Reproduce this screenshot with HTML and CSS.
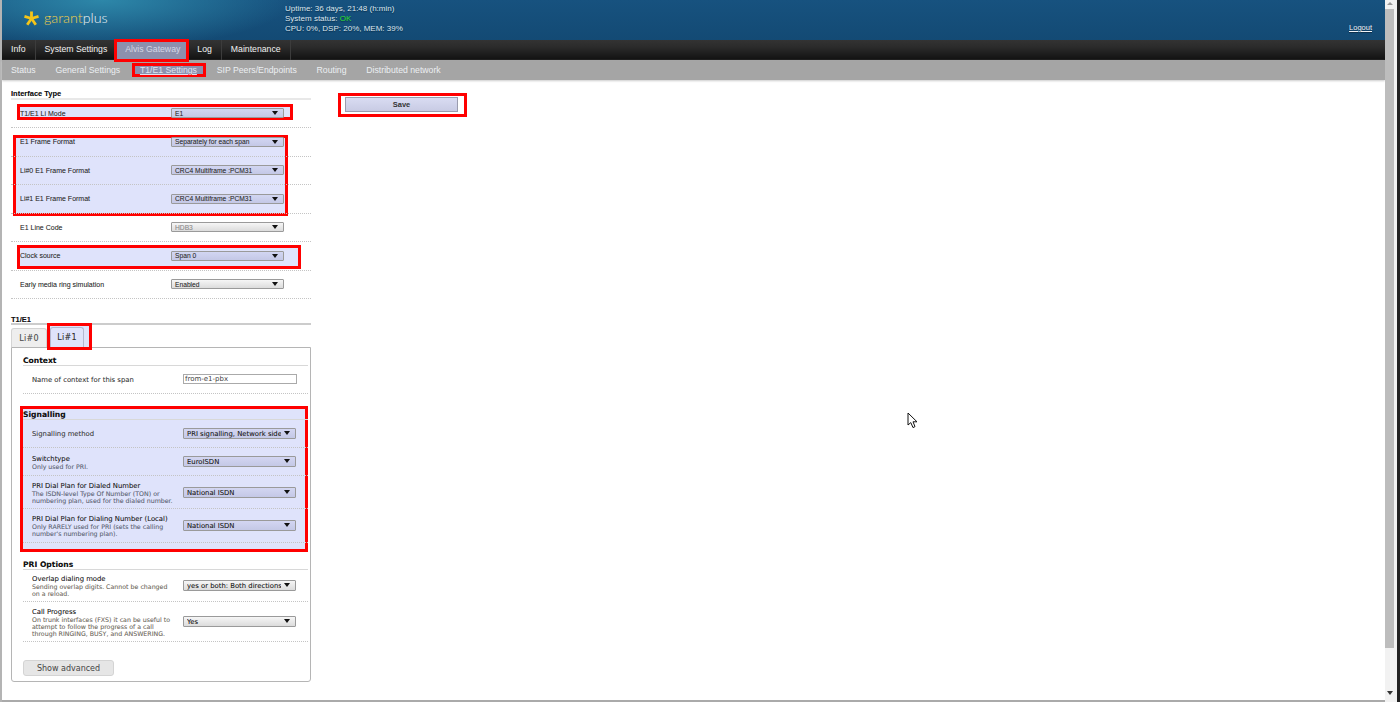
FILE: index.html
```html
<!DOCTYPE html>
<html lang="en">
<head>
<meta charset="utf-8">
<title>Garantplus Gateway</title>
<link rel="stylesheet" href="styles.css">
</head>
<body>
<div class="window">
  <div class="page">
    <header class="top">
      <div class="logo">
        <svg class="logo-star" width="15" height="15" viewBox="0 0 16 16" aria-hidden="true"><g stroke="#f5c518" stroke-width="3" stroke-linecap="butt"><line x1="8" y1="8" x2="8" y2="0.5"/><line x1="8" y1="8" x2="15.5" y2="5.8"/><line x1="8" y1="8" x2="0.5" y2="5.8"/><line x1="8" y1="8" x2="12.6" y2="14.6"/><line x1="8" y1="8" x2="3.4" y2="14.6"/></g></svg>
        <span class="logo-text"><span class="logo-a">garant</span>plus</span>
      </div>
      <div class="status">
        <div>Uptime: 36 days, 21:48 (h:min)</div>
        <div>System status: <b class="ok">OK</b></div>
        <div>CPU: 0%, DSP: 20%, MEM: 39%</div>
      </div>
      <a class="logout">Logout</a>
    </header>
    <nav class="nav">
      <a class="nav-item">Info</a>
      <a class="nav-item">System Settings</a>
      <a class="nav-item active">Alvis Gateway</a>
      <a class="nav-item">Log</a>
      <a class="nav-item">Maintenance</a>
    </nav>
    <nav class="subnav">
      <a class="sub-item">Status</a>
      <a class="sub-item">General Settings</a>
      <a class="sub-item active">T1/E1 Settings</a>
      <a class="sub-item">SIP Peers/Endpoints</a>
      <a class="sub-item">Routing</a>
      <a class="sub-item">Distributed network</a>
    </nav>
    <main class="content">
      <div class="left">
        <h3 class="title">Interface Type</h3>
        <div class="hl hl-mode">
          <div class="row"><span class="lab">T1/E1 Li Mode</span><span class="sel">E1</span></div>
        </div>
        <div class="hl hl-frame">
          <div class="row"><span class="lab">E1 Frame Format</span><span class="sel">Separately for each span</span></div>
          <div class="row"><span class="lab">Li#0 E1 Frame Format</span><span class="sel">CRC4 Multiframe :PCM31</span></div>
          <div class="row"><span class="lab">Li#1 E1 Frame Format</span><span class="sel">CRC4 Multiframe :PCM31</span></div>
        </div>
        <div class="row"><span class="lab">E1 Line Code</span><span class="sel plain disabled">HDB3</span></div>
        <div class="hl hl-clock">
          <div class="row"><span class="lab">Clock source</span><span class="sel">Span 0</span></div>
        </div>
        <div class="row"><span class="lab">Early media ring simulation</span><span class="sel plain">Enabled</span></div>

        <h3 class="title second">T1/E1</h3>
        <div class="tabs">
          <span class="tab">Li#0</span>
          <span class="tab current">Li#1</span>
        </div>
        <section class="panel">
          <h4 class="sec">Context</h4>
          <div class="prow ctx"><div class="ptext"><div class="pname thin">Name of context for this span</div></div><input class="inp" value="from-e1-pbx"></div>
          <div class="hl hl-sig">
            <h4 class="sec">Signalling</h4>
            <div class="prow h28"><div class="ptext"><div class="pname thin">Signalling method</div></div><span class="psel"><span class="psel-t">PRI signalling, Network side</span></span></div>
            <div class="prow h28"><div class="ptext"><div class="pname">Switchtype</div><div class="pdesc">Only used for PRI.</div></div><span class="psel"><span class="psel-t">EuroISDN</span></span></div>
            <div class="prow h33"><div class="ptext"><div class="pname">PRI Dial Plan for Dialed Number</div><div class="pdesc">The ISDN-level Type Of Number (TON) or<br>numbering plan, used for the dialed number.</div></div><span class="psel"><span class="psel-t">National ISDN</span></span></div>
            <div class="prow h34"><div class="ptext"><div class="pname">PRI Dial Plan for Dialing Number (Local)</div><div class="pdesc">Only RARELY used for PRI (sets the calling<br>number's numbering plan).</div></div><span class="psel"><span class="psel-t">National ISDN</span></span></div>
          </div>
          <h4 class="sec options">PRI Options</h4>
          <div class="prow h32"><div class="ptext"><div class="pname">Overlap dialing mode</div><div class="pdesc warm">Sending overlap digits. Cannot be changed<br>on a reload.</div></div><span class="psel light"><span class="psel-t">yes or both: Both directions</span></span></div>
          <div class="prow h40"><div class="ptext"><div class="pname">Call Progress</div><div class="pdesc warm">On trunk interfaces (FXS) it can be useful to<br>attempt to follow the progress of a call<br>through RINGING, BUSY, and ANSWERING.</div></div><span class="psel light"><span class="psel-t">Yes</span></span></div>
          <button class="advanced" type="button">Show advanced</button>
        </section>
      </div>
      <div class="right">
        <button class="save" type="button">Save</button>
      </div>
    </main>
    <svg class="cursor" width="12" height="17" viewBox="0 0 12 17" aria-hidden="true"><path d="M1 1V13L3.8 10.6L6 15.6L8 14.6L6 9.8H10Z" fill="#fff" stroke="#111" stroke-width="1"/></svg>
  </div>
  <div class="scroll">
    <span class="arrow up"></span>
    <span class="thumb"></span>
    <span class="arrow down"></span>
  </div>
</div>
</body>
</html>
```
FILE: styles.css
```css
* { box-sizing: border-box; }
html, body { margin: 0; height: 100%; overflow: hidden; background: #fff; }
body { font-family: "Liberation Sans", Arial, sans-serif; color: #222; }

.window {
  display: flex;
  height: 702px;
  border-left: 2px solid #b4b4b4;
}
.page { position: relative; flex: 1; min-width: 0; border-bottom: 2px solid #aaa; }

.top {
  display: flex;
  height: 40px;
  background:
    radial-gradient(ellipse 190px 48px at 100px 0, #2d87a9 0%, rgba(45,135,169,.55) 45%, rgba(45,135,169,0) 100%),
    linear-gradient(#17527f, #134a74);
  color: #e4edf3;
  position: relative;
}
.logo { display: flex; align-items: center; width: 283px; padding: 0 0 5px 22px; gap: 5px; }
.logo-star { position: relative; top: 1px; }
.logo-text { font: 300 14.3px Lato, "Open Sans", sans-serif; color: #eef3f6; }
.logo-a { color: #f2cf4a; }
.status { padding-top: 4px; font-size: 8px; line-height: 10px; color: #dce6ee; text-shadow: 0 1px 1px #0b2f4c; }
.ok { color: #31e02c; font-weight: 400; }
.logout {
  position: absolute; right: 13px; top: 23px;
  font-size: 7.5px; color: #f0f4f8; text-decoration: underline;
  text-shadow: 0 1px 1px #0b2f4c;
}

.nav {
  display: flex;
  height: 20px;
  background: linear-gradient(#333 0%, #2b2b2b 35%, #111 100%);
}
.nav-item {
  padding: 0 9px;
  line-height: 19px;
  font-size: 8.7px;
  color: #f2f2f2;
  border-right: 1px solid #3c3c3c;
}
.nav-item.active {
  position: relative;
  background: #8d90ad;
  color: #d5d7e6;
  padding: 0 8px;
  border-right: 0;
}
.nav-item.active::after {
  content: "";
  position: absolute;
  left: -3px; right: -1px; top: -1px; bottom: -2px;
  border: 3px solid #f00;
  z-index: 2;
}

.subnav {
  display: flex;
  height: 20px;
  gap: 19.8px;
  padding-left: 9px;
  background: #a5a5a5;
  align-items: center;
  box-shadow: 0 1px 2px #ccc;
}
.sub-item { font-size: 8.7px; color: #eceff2; }
.sub-item.active {
  position: relative;
  text-decoration: underline;
  color: #dfe3f0;
  z-index: 1;
}
.sub-item.active::before {
  content: "";
  position: absolute;
  left: -8px; right: -9px; top: -2px; bottom: -2px;
  background: #8d90ad;
  border: 3px solid #f00;
  z-index: -1;
}

.content { display: flex; padding: 10px 0 0 9px; }
.left { width: 300px; text-shadow: 0 0 .6px rgba(40,40,40,.35); }
.right { padding: 7px 0 0 34px; }
.save {
  display: block;
  width: 113px; height: 15px;
  position: relative;
  font: 700 7.5px "Liberation Sans", sans-serif;
  color: #333;
  background: linear-gradient(#d9dcf2, #c8cbe4);
  border: 1px solid #9a9cae;
  padding: 0;
}
.save::after {
  content: "";
  position: absolute;
  left: -8px; right: -10px; top: -5px; bottom: -6px;
  border: 3px solid #f00;
}

.title {
  margin: 0;
  font-size: 7.5px;
  line-height: 7px;
  color: #111;
  border-bottom: 2px solid #e8e8e8;
  height: 9.5px;
}
.title.second { margin-top: 16.5px; border-bottom-color: #ccc; }

.row {
  display: flex;
  align-items: center;
  justify-content: space-between;
  height: 28.5px;
  padding: 0 27px 0 9px;
  border-bottom: 1px dotted #c4c4c4;
}
.lab { font-size: 7px; color: #333; }
.sel {
  display: flex;
  align-items: center;
  width: 113px; height: 10px;
  padding-left: 3px;
  font-size: 6.7px;
  color: #333;
  border: 1px solid #9a9a9a;
  border-radius: 1px;
  background: linear-gradient(#d2d6f2, #c4c8e6);
  position: relative;
}
.sel.plain { background: linear-gradient(#f6f6f6, #dcdcdc); }
.sel.disabled { color: #999; }
.sel::after, .psel::after {
  content: "";
  position: absolute;
  right: 5px; top: 2px;
  border: 3px solid transparent;
  border-top: 4px solid #111;
  border-bottom: 0;
}

.hl { position: relative; isolation: isolate; }
.hl::before {
  content: "";
  position: absolute;
  z-index: -1;
  background: #dfe3fb;
  border: 3px solid #f00;
}
.hl-mode::before { left: 6px; right: 18px; top: 4px; bottom: 8px; }
.hl-frame::before { left: 2px; right: 23px; top: 6.5px; bottom: -2px; }
.hl-clock::before { left: 6px; right: 10px; top: 3px; bottom: 2px; }
.hl-sig::before { left: -3px; right: 2px; top: -3px; bottom: -9px; }

.tabs { display: flex; margin-top: 3px; height: 19px; align-items: flex-end; }
.tab {
  display: flex; align-items: center; justify-content: center;
  width: 36px; height: 19px;
  font: 8px "DejaVu Sans", sans-serif;
  letter-spacing: .3px;
  color: #555;
  background: #eee;
  border: 1px solid #d4d4d4;
  border-bottom: 0;
  border-radius: 3px 3px 0 0;
}
.tab.current {
  position: relative;
  width: 34px;
  margin-left: 3px;
  background: none;
  border: 0;
  color: #333;
  z-index: 1;
  height: 20px;
}
.tab.current::before {
  content: "";
  position: absolute;
  left: -3px; right: -8px; top: -4px; bottom: -3px;
  background: #dfe3fb;
  border: 3px solid #f00;
  z-index: -1;
}
.tab.current::after {
  content: "";
  position: absolute;
  inset: 0;
  border: 1px solid #b4b7d0;
  border-bottom: 0;
  border-radius: 3px 3px 0 0;
}
.panel {
  width: 300px;
  height: 335px;
  padding: 7px 0 0 11px;
  border: 1px solid #b5b5b5;
  border-radius: 0 0 3px 3px;
  font-family: "DejaVu Sans", sans-serif;
}
.sec {
  margin: 0 2px 0 0;
  height: 11px;
  font: 700 7.6px/12px "DejaVu Sans", sans-serif;
  color: #111;
  border-bottom: 1px solid #d8d8d8;
}
.sec.options { margin-top: 16px; }
.prow {
  display: flex;
  align-items: center;
  justify-content: space-between;
  padding: 0 12px 0 9px;
  margin-right: 2px;
  border-bottom: 1px dotted #c4c4c4;
}
.ctx { height: 27.5px; margin-bottom: 15.5px; }
.h28 { height: 28px; }
.h32 { height: 32px; }
.h33 { height: 33px; }
.h34 { height: 34px; }
.h40 { height: 40px; }
.ptext { min-width: 0; padding-top: 2px; }
.pname { font-size: 6.85px; line-height: 7px; color: #222; }
.pname.thin { color: #444; }
.pdesc { font-size: 6.27px; line-height: 7px; color: #666d80; }
.pdesc.warm { color: #7a7468; }
.psel {
  position: relative;
  flex: none;
  display: block;
  width: 113px; height: 11px;
  padding: 0 14px 0 3px;
  font-size: 6.85px;
  line-height: 10px;
  color: #222;
  border: 1px solid #9a9a9a;
  border-radius: 1px;
  background: linear-gradient(#d3d6f2, #c4c8e6);
}
.psel-t { display: block; white-space: nowrap; overflow: hidden; }
.psel.light { background: linear-gradient(#f6f6f6, #dcdcdc); }
.inp {
  width: 114px; height: 10px;
  margin-right: -1px;
  padding: 0 0 0 1px;
  font: 7px "DejaVu Sans", sans-serif;
  color: #444;
  border: 1px solid #aaa;
  background: #fff;
}
.advanced {
  display: block;
  width: 91px; height: 16px;
  margin-top: 18px;
  font: 8px "DejaVu Sans", sans-serif;
  color: #444;
  background: #e6e6e6;
  border: 1px solid #d4d4d4;
  border-radius: 3px;
  padding: 0;
}

.cursor { position: absolute; left: 905px; top: 412px; }

.scroll {
  position: relative;
  display: flex;
  flex-direction: column;
  flex: none;
  width: 15px;
  background: #f2f2f2;
  border-right: 3px solid #222;
}
.arrow { flex: none; height: 9px; position: relative; }
.arrow::after {
  content: ""; position: absolute; left: 2px;
  border: 3px solid transparent;
}
.arrow.up::after { top: 2px; border-top: 0; border-bottom: 3px solid #999; }
.arrow.down { height: 17px; margin-top: auto; }
.arrow.down::after { top: 6px; border-bottom: 0; border-top: 4px solid #333; }
.thumb { flex: none; width: 9px; height: 639px; background: #bdbdbd; }
```
